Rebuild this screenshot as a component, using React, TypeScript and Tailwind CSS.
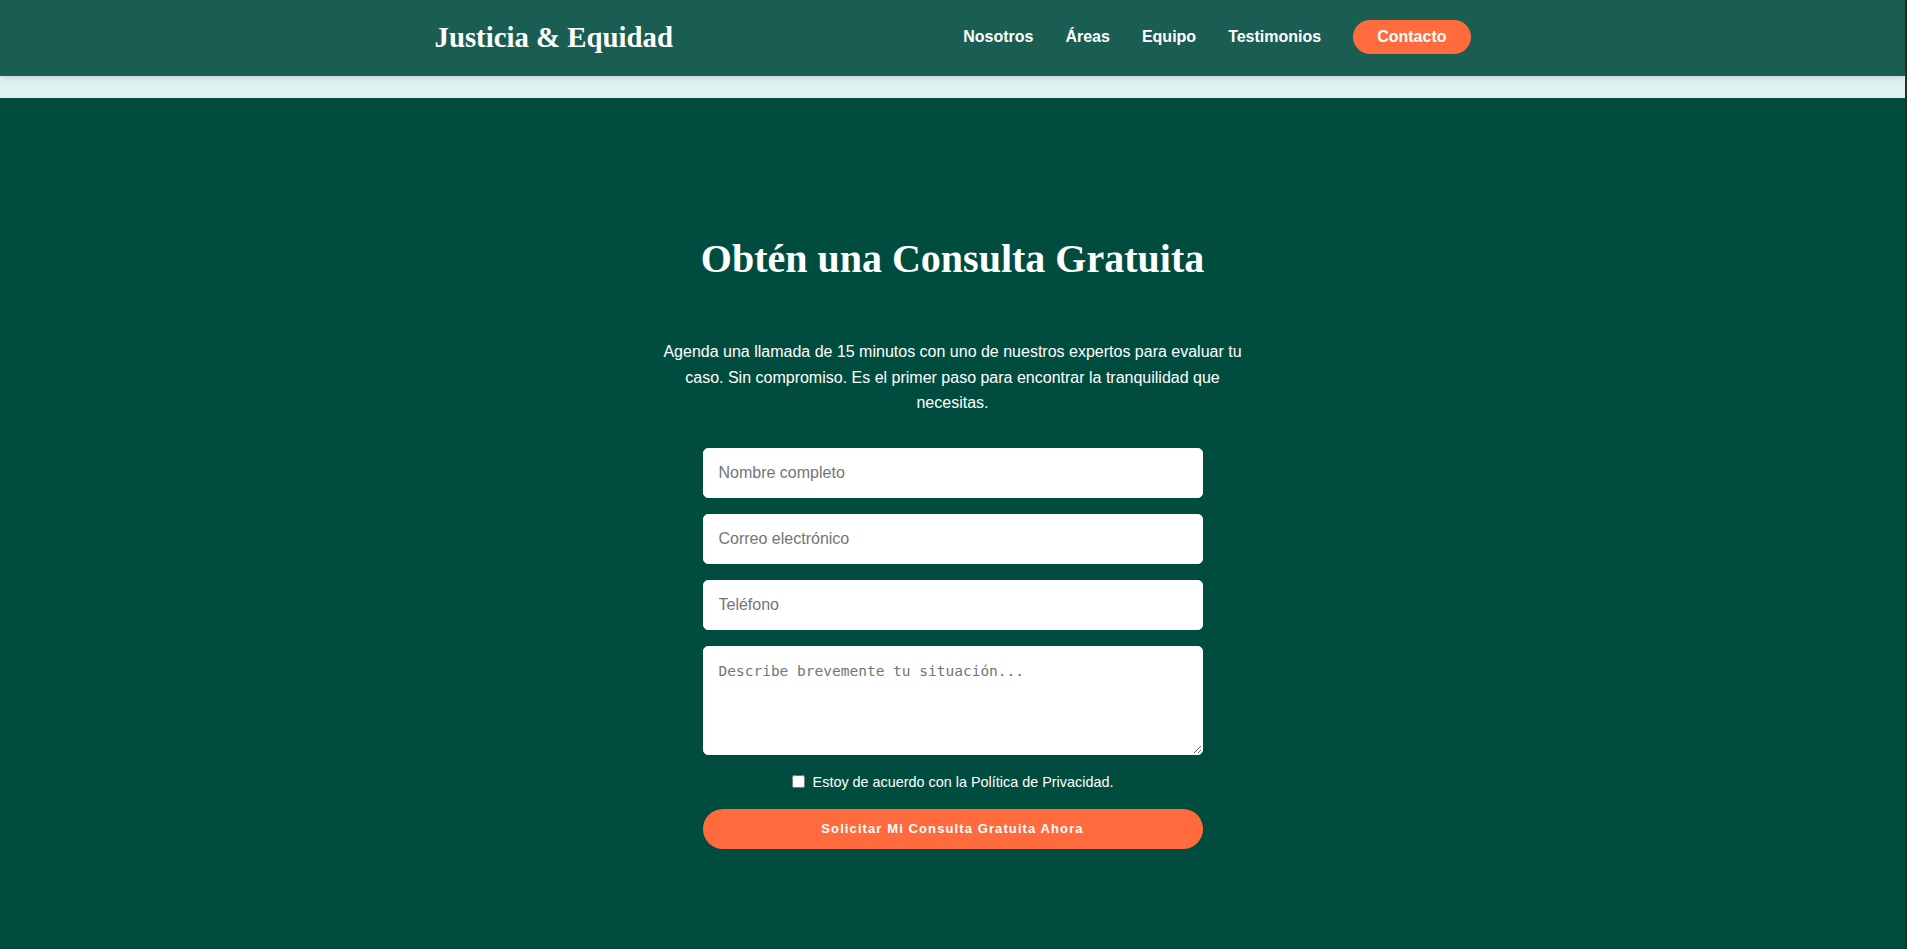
import { useState } from 'react';

const navLinks = ['Nosotros', 'Áreas', 'Equipo', 'Testimonios'];

const fields = [
  { name: 'nombre', type: 'text', placeholder: 'Nombre completo' },
  { name: 'email', type: 'email', placeholder: 'Correo electrónico' },
  { name: 'telefono', type: 'tel', placeholder: 'Teléfono' },
];

function SiteHeader() {
  return (
    <header className="relative z-10 bg-[#1a5e53] shadow-[0_2px_6px_rgba(0,0,0,0.12)]">
      <div className="mx-auto flex h-[76px] max-w-[1100px] items-center justify-between px-8 pb-[2px]">
        <a href="#" className="font-['Liberation_Serif',serif] text-[28.8px] font-bold leading-none text-white">
          Justicia &amp; Equidad
        </a>
        <nav className="flex items-center gap-8 font-['Liberation_Sans',Arial,sans-serif] text-base font-bold text-white">
          {navLinks.map((link) => (
            <a key={link} href="#">
              {link}
            </a>
          ))}
          <a href="#" className="rounded-full bg-[#ff6b3d] px-6 py-2 leading-[18px]">
            Contacto
          </a>
        </nav>
      </div>
    </header>
  );
}

export default function App() {
  const [agreed, setAgreed] = useState(false);

  return (
    <div className="min-h-screen border-r-2 border-[#2b2b2b] bg-[#e0f2f1] font-['Liberation_Sans',Arial,sans-serif]">
      <SiteHeader />
      <div className="h-[22px]" />

      <section className="bg-[#004d40] px-4 pb-[140px] pt-[137px] text-center text-white">
        <h2 className="font-['Liberation_Serif',serif] text-[40px] font-bold leading-[48px]">Obtén una Consulta Gratuita</h2>
        <p className="mx-auto mt-[56px] max-w-[600px] text-base leading-[25.6px]">
          Agenda una llamada de 15 minutos con uno de nuestros expertos para evaluar tu caso. Sin compromiso. Es el primer paso para
          encontrar la tranquilidad que necesitas.
        </p>

        <form className="mx-auto mt-8 flex max-w-[500px] flex-col gap-4" onSubmit={(e) => e.preventDefault()}>
          {fields.map((field) => (
            <input
              key={field.name}
              type={field.type}
              name={field.name}
              placeholder={field.placeholder}
              className="h-[50px] rounded-[5px] border border-white bg-white px-[15px] text-base leading-[18px] text-gray-900 placeholder:text-[#757575] focus:outline-none"
            />
          ))}
          <textarea
            name="mensaje"
            placeholder="Describe brevemente tu situación..."
            className="h-[109px] rounded-[5px] border border-white bg-white px-[15px] pt-[14px] font-['DejaVu_Sans_Mono',monospace] text-[14.5px] leading-[20px] text-gray-900 placeholder:text-[#757575] focus:outline-none"
          />

          <label className="flex items-center justify-center gap-2 text-[14.4px] leading-[22px]">
            <input type="checkbox" checked={agreed} onChange={(e) => setAgreed(e.target.checked)} className="h-[13px] w-[13px]" />
            Estoy de acuerdo con la Política de Privacidad.
          </label>

          <button type="submit" className="h-[40px] rounded-full bg-[#ff6b3d] text-[13px] font-bold tracking-[1.1px] text-white">
            Solicitar Mi Consulta Gratuita Ahora
          </button>
        </form>
      </section>
    </div>
  );
}
